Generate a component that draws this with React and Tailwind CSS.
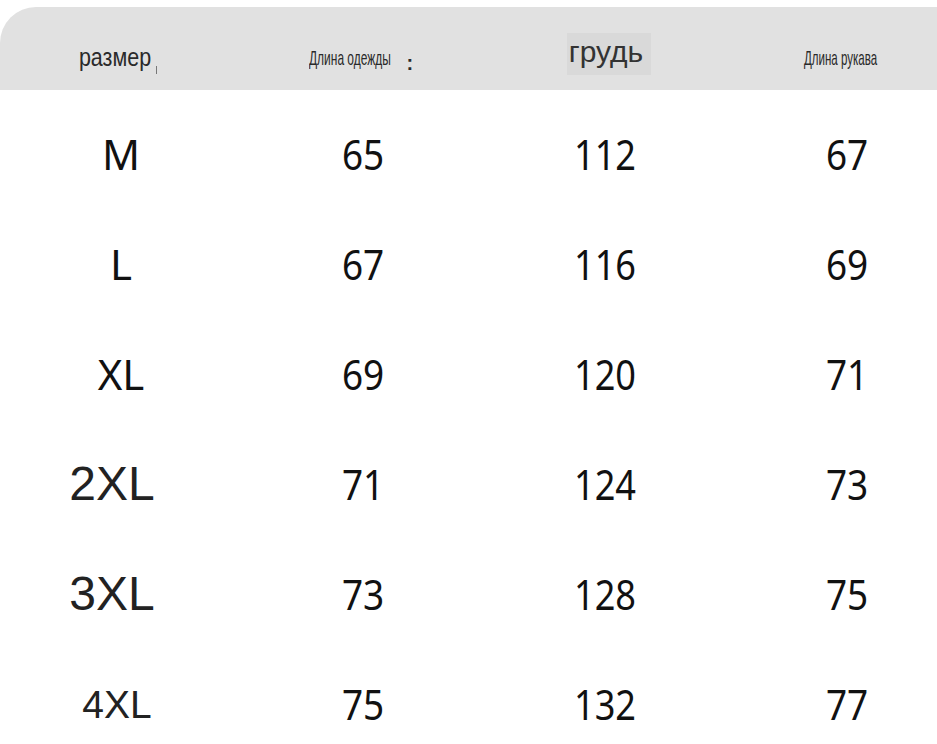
import React from "react";

const rows = [
  { size: "M", a: "65", b: "112", c: "67", arial: false },
  { size: "L", a: "67", b: "116", c: "69", arial: false },
  { size: "XL", a: "69", b: "120", c: "71", arial: false },
  { size: "2XL", a: "71", b: "124", c: "73", arial: true },
  { size: "3XL", a: "73", b: "128", c: "75", arial: true },
  { size: "4XL", a: "75", b: "132", c: "77", arial: true, small: true },
];

function Cell({ children, className = "" }) {
  return (
    <div className={`flex items-center justify-center h-[110px] ${className}`}>
      {children}
    </div>
  );
}

function App() {
  return (
    <div className="w-[937px] h-[744px] bg-white overflow-hidden">
      {/* header */}
      <div className="mt-[7px] h-[83px] pt-[18px] bg-[#e1e1e1] rounded-tl-[36px] grid grid-cols-[242px_242px_242px_242px] items-center text-[#2a2a2a] font-['Liberation_Sans',Arial,sans-serif]">
        <div className="flex items-end justify-center pr-[12px]">
          <span className="text-[25px] leading-none scale-x-[0.86] inline-block">размер</span>
          <span className="w-[1px] h-[8px] bg-[#777] mb-[-4px] ml-[0px]"></span>
        </div>
        <div className="flex items-center justify-center pr-[4px]">
          <span className="text-[21px] leading-none scale-x-[0.57] inline-block mr-[-46px] origin-left">Длина одежды</span>
          <span className="text-[20px] font-bold leading-none mt-[10px]">:</span>
        </div>
        <div className="flex items-center justify-center pl-[8px] mb-[8px]">
          <span className="bg-[#d9d9d9] h-[42px] pl-[2px] pr-[8px] flex items-center text-[30px] leading-none text-[#333] pb-[3px]">грудь</span>
        </div>
        <div className="flex items-center justify-center pr-[12px]">
          <span className="text-[21px] leading-none scale-x-[0.55] inline-block">Длина рукава</span>
        </div>
      </div>

      {/* body */}
      <div className="pt-[9px] grid grid-cols-[242px_242px_242px_242px] text-[#111] font-['Noto_Sans','Open_Sans',sans-serif]">
        {rows.map((r) => (
          <React.Fragment key={r.size}>
            <Cell>
              {r.arial ? (
                <span
                  className={`font-['Liberation_Sans',Arial,sans-serif] leading-none text-[#222] ${
                    r.small ? "text-[39px] pr-[8px]" : "text-[48px] pr-[18px]"
                  }`}
                >
                  {r.size}
                </span>
              ) : (
                <span className="text-[42px] leading-none">{r.size}</span>
              )}
            </Cell>
            <Cell>
              <span className="text-[42px] leading-none scale-x-[0.88] inline-block">{r.a}</span>
            </Cell>
            <Cell>
              <span className="text-[42px] leading-none scale-x-[0.86] inline-block">{r.b}</span>
            </Cell>
            <Cell>
              <span className="text-[42px] leading-none scale-x-[0.88] inline-block">{r.c}</span>
            </Cell>
          </React.Fragment>
        ))}
      </div>
    </div>
  );
}

export default App;
